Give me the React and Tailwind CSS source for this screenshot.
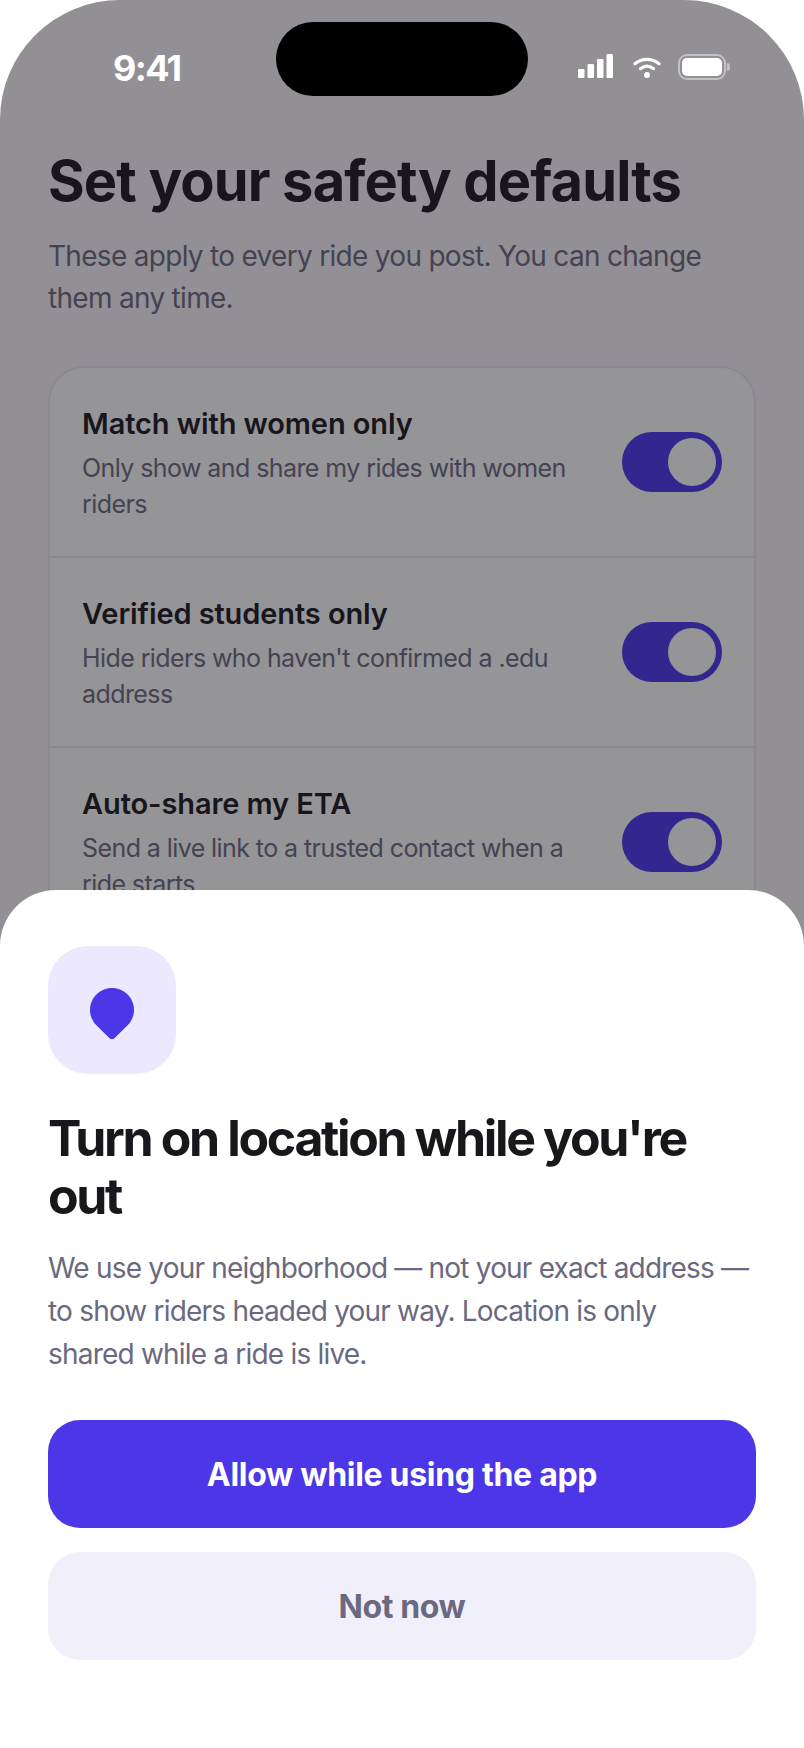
const font = { fontFamily: 'Inter, "Liberation Sans", sans-serif' };

function Row({ title, sub, last }) {
  return (
    <div className={`flex items-center justify-between px-[32px] py-[34px] ${last ? "" : "border-b-2 border-[#eceaf3]"}`}>
      <div className="w-[490px] pt-[4px]">
        <div className="text-[29px] leading-[36px] font-semibold tracking-[-0.1px] text-[#18171c]">{title}</div>
        <div className="mt-[8px] text-[25px] leading-[36px] tracking-[-0.58px] text-[#6b6980]">{sub}</div>
      </div>
      <div className="flex h-[60px] w-[100px] justify-end rounded-full bg-[#4b36f0] p-[6px]">
        <div className="h-[48px] w-[48px] rounded-full bg-white" />
      </div>
    </div>
  );
}

export default function App() {
  return (
    <div style={font} className="h-[1748px] w-[804px] overflow-hidden bg-white">
      <div className="relative h-full overflow-hidden rounded-t-[120px] bg-[#f9f8fc]">
        <div className="h-[136px]" />
        <div className="px-[48px]">
          <h1 className="mt-[12px] text-[56px] leading-[66px] font-bold tracking-[-0.85px] whitespace-nowrap text-[#18171c]">Set your safety defaults</h1>
          <p className="mt-[21px] text-[28px] leading-[42px] tracking-[-0.7px] text-[#6b6980]">
            These apply to every ride you post. You can change them any time.
          </p>
          <div className="mt-[47px] rounded-[36px] border-2 border-[#eceaf3] bg-white">
            <Row title="Match with women only" sub="Only show and share my rides with women riders" />
            <Row title="Verified students only" sub="Hide riders who haven't confirmed a .edu address" />
            <Row title="Auto-share my ETA" sub="Send a live link to a trusted contact when a ride starts" last />
          </div>
        </div>

        <div className="absolute inset-0 bg-[#18161c75]" />

        <div className="absolute inset-x-0 top-0 flex h-[136px] items-start justify-between pl-[113px] pr-[74px]">
          <div className="mt-[47px] text-[36px] leading-[42px] font-bold tracking-[-1.6px] text-white">9:41</div>
          <div className="mt-[54px] flex items-start">
            <svg width="35" height="24" viewBox="0 0 35 24" fill="#fff">
              <rect x="0" y="15" width="6.5" height="9" rx="1.2" />
              <rect x="9.5" y="10" width="6.5" height="14" rx="1.2" />
              <rect x="19" y="5" width="6.5" height="19" rx="1.2" />
              <rect x="28.5" y="0" width="6.5" height="24" rx="1.2" />
            </svg>
            <svg className="ml-[20px] mt-[3px]" width="28" height="21" viewBox="0 0 28 21" fill="none" stroke="#fff" strokeWidth="3.2" strokeLinecap="round">
              <path d="M2 6.8C9 .8 19 .8 26 6.8" />
              <path d="M7.5 11.8C11.5 8.6 16.5 8.6 20.5 11.8" />
              <circle cx="14" cy="18" r="3" fill="#fff" stroke="none" />
            </svg>
            <div className="ml-[17px] flex items-center gap-[1px]">
              <div className="h-[26px] w-[48px] rounded-[9px] border-2 border-[#ffffff70] p-[2px]">
                <div className="h-full w-full rounded-[5px] bg-white" />
              </div>
              <div className="h-[8px] w-[3px] rounded-r-full bg-[#ffffff70]" />
            </div>
          </div>
        </div>

        <div className="absolute left-[276px] top-[22px] h-[74px] w-[252px] rounded-full bg-black" />

        <div className="absolute inset-x-0 bottom-0 h-[858px] rounded-t-[56px] bg-white px-[48px] pt-[56px]">
          <div className="flex h-[128px] w-[128px] items-center justify-center rounded-[40px] bg-[#ece9fe]">
            <svg className="mt-[7px]" width="44" height="52" viewBox="0 0 44 52">
              <path fill="#4b36e8" d="M22 0C34.2 0 44 9.8 44 22C44 28 41.6 33.2 37.6 37.2L24.4 50.2C23 51.4 21 51.4 19.6 50.2L6.4 37.2C2.4 33.2 0 28 0 22C0 9.8 9.8 0 22 0Z" />
            </svg>
          </div>
          <h2 className="mt-[35px] text-[50px] leading-[58px] font-bold tracking-[-2.35px] text-[#18171c]">Turn on location while you're out</h2>
          <p className="mt-[22px] text-[28px] leading-[43px] tracking-[-0.8px] text-[#6b6980]">
            We use your neighborhood — not your exact address —<br />
            to show riders headed your way. Location is only<br />
            shared while a ride is live.
          </p>
          <button className="mt-[44px] flex h-[108px] w-full items-center justify-center rounded-[32px] bg-[#4b36e8] pt-[2px] text-[32px] font-bold tracking-[-0.3px] text-white">
            Allow while using the app
          </button>
          <button className="mt-[24px] flex h-[108px] w-full items-center justify-center rounded-[32px] bg-[#f1eff9] pt-[2px] text-[32px] font-bold tracking-[-0.4px] text-[#6b6980]">
            Not now
          </button>
        </div>
      </div>
    </div>
  );
}
